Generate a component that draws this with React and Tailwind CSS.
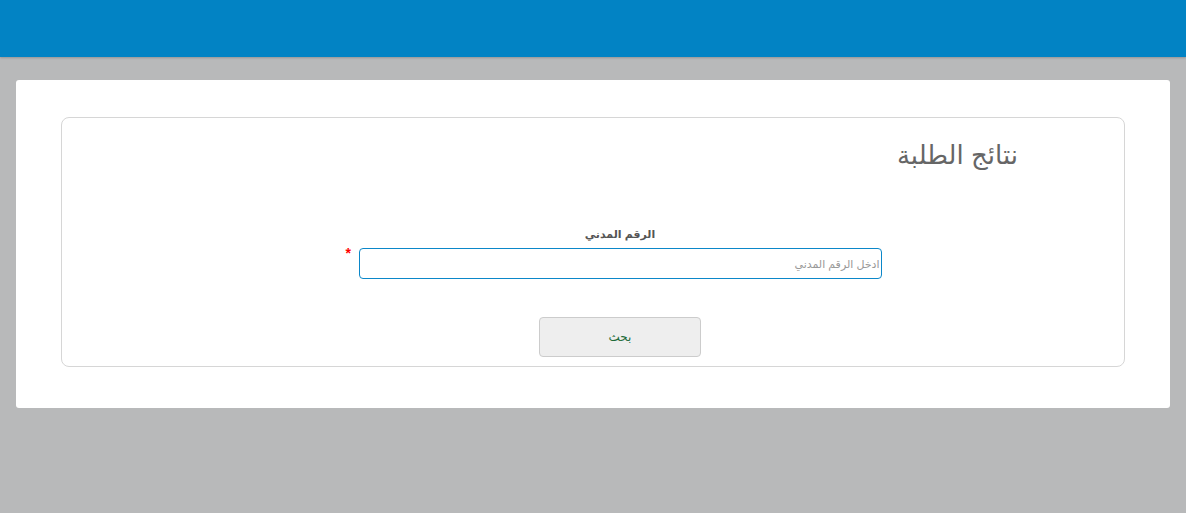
export default function App() {
  return (
    <div dir="rtl" className="min-h-[513px] bg-[#b8b9ba] font-['Liberation_Sans','DejaVu_Sans',sans-serif]">
      <header className="h-[57px] bg-[#0283c4] shadow-[0_1px_2px_rgba(0,0,0,0.2)]" />
      <main className="px-4 pt-[23px]">
        <div className="rounded-[3px] bg-white px-[45px] pb-[41px] pt-[37px]">
          <section className="flex h-[250px] flex-col rounded-[8px] border border-[#d6d6d6] pl-[160px] pr-[106px] pt-[21px]">
            <h1 className="text-[26px] leading-[33px] text-[#666]">نتائج الطلبة</h1>
            <div className="mt-[54px] flex flex-col items-center">
              <label className="text-[11px] font-bold leading-[16px] text-[#555]">الرقم المدني</label>
              <div className="relative mt-[6px] w-[523px]">
                <input
                  className="h-[31px] w-full rounded-[4px] border border-[#0b87c9] bg-white px-[1px] text-[11px] text-[#333] outline-none placeholder:text-[#999]"
                  placeholder="ادخل الرقم المدني"
                />
                <span className="absolute left-[-13px] top-[-5px] text-[14px] font-bold text-[#f00]">*</span>
              </div>
              <button className="mt-[38px] h-[40px] w-[162px] rounded-[4px] border border-[#ccc] bg-[#eee] text-[12px] text-[#1e6b3a]">
                بحث
              </button>
            </div>
          </section>
        </div>
      </main>
    </div>
  );
}
